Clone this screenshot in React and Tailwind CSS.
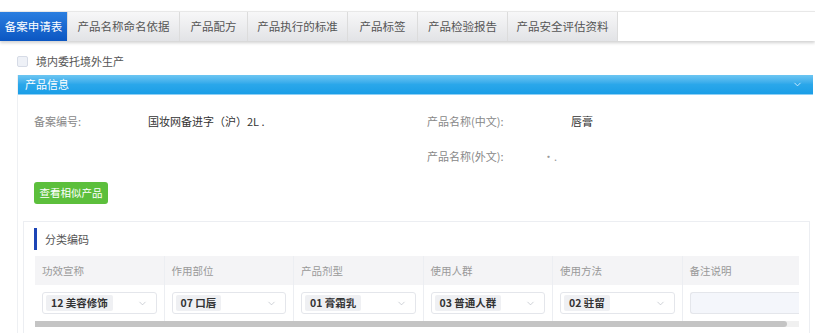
import { ChevronDown } from 'lucide-react'

const tabs = ['备案申请表', '产品名称命名依据', '产品配方', '产品执行的标准', '产品标签', '产品检验报告', '产品安全评估资料']
const tabWidths = ['w-[68px]', 'w-[112px]', 'w-[68px]', 'w-[100px]', 'w-[70px]', 'w-[90px]', 'w-[110px]']

const columns = [
  { title: '功效宣称', value: '12 美容修饰' },
  { title: '作用部位', value: '07 口唇' },
  { title: '产品剂型', value: '01 膏霜乳' },
  { title: '使用人群', value: '03 普通人群' },
  { title: '使用方法', value: '02 驻留' },
]

function App() {
  return (
    <div className="w-[815px] h-[333px] overflow-hidden bg-white text-[11px]" style={{ fontFamily: '"Noto Sans CJK SC", "Noto Sans", sans-serif' }}>
      {/* tab bar */}
      <div className="mt-[11px] h-[30px] flex shadow-[0_2px_3px_rgba(0,0,0,0.18)] border-t border-[#e8e8e8]">
        {tabs.map((t, i) => (
          <div
            key={t}
            className={`${tabWidths[i]} flex items-center justify-center border-r border-[#dcdcdc] text-[11.5px] ${
              i === 0
                ? 'bg-gradient-to-b from-[#2a7ee0] to-[#0b56c2] text-white'
                : 'bg-gradient-to-b from-[#f7f7f8] to-[#e2e3e6] text-[#555]'
            }`}
          >
            {t}
          </div>
        ))}
        <div className="flex-1 bg-white" />
      </div>

      {/* checkbox */}
      <div className="flex items-center gap-[8px] pl-[17px] mt-[14px] h-[12px]">
        <span className="w-[11px] h-[11px] rounded-[2px] border border-[#d6dbe6] bg-[#eef1f7]" />
        <span className="text-[#555]">境内委托境外生产</span>
      </div>

      {/* product info panel */}
      <div className="ml-[17px] mr-[2px] mt-[8px] border-l border-[#eef0f3]">
        <div className="h-[19px] flex items-center justify-between pl-[7px] pr-[10px] bg-gradient-to-b from-[#6cc6f2] via-[#2aa7ea] to-[#1a9ee7] text-white">
          <span>产品信息</span>
          <ChevronDown size={11} strokeWidth={2} className="text-[#d8efff]" />
        </div>
        <div className="border-t border-[#8fd0f5]">
          <div className="grid grid-cols-[393px_1fr] pt-[18px] pl-[16px] text-[11px]">
            <div className="flex h-[16px] items-center">
              <span className="w-[114px] text-[#888]">备案编号:</span>
              <span className="text-[#333]">国妆网备进字（沪）2L .</span>
            </div>
            <div className="flex h-[16px] items-center">
              <span className="w-[114px] text-[#888]">产品名称(中文):</span>
              <span className="text-[#333] pl-[30px]">唇膏</span>
            </div>
            <div />
            <div className="flex h-[16px] items-center mt-[19px]">
              <span className="w-[114px] text-[#888]">产品名称(外文):</span>
              <span className="text-[#999] pl-[2px]">·.</span>
            </div>
          </div>

          <button className="ml-[16px] mt-[18px] w-[74px] h-[22px] rounded-[3px] bg-[#5cbf3c] text-white text-[10.5px]">
            查看相似产品
          </button>

          {/* classification card */}
          <div className="ml-[5px] mr-[3px] mt-[17px] border border-[#eceef2] bg-white pb-[8px]">
            <div className="flex items-center h-[22px] mt-[6px] ml-[10px]">
              <span className="w-[3px] h-[22px] bg-[#1c45b6]" />
              <span className="ml-[8px] text-[#555]">分类编码</span>
            </div>
            <div className="ml-[11px] mr-[10px] mt-[6px] overflow-hidden">
              <div className="flex">
                {columns.map((c) => (
                  <div key={c.title} className="w-[129.5px] shrink-0 border-r border-[#eceef2]">
                    <div className="h-[29px] bg-[#f4f4f6] flex items-center pl-[7px] text-[#999] text-[10.5px]">{c.title}</div>
                    <div className="h-[36px] flex items-center px-[7px]">
                      <div className="flex-1 h-[22px] rounded-[3px] border border-[#e4e6eb] bg-white flex items-center justify-between pl-[3px] pr-[8px]">
                        <span className="bg-[#eff0f3] rounded-[2px] px-[5px] h-[16px] flex items-center text-[#333] font-semibold text-[10.5px]">{c.value}</span>
                        <ChevronDown size={11} strokeWidth={1.5} className="text-[#b8bcc4]" />
                      </div>
                    </div>
                  </div>
                ))}
                <div className="w-[130px] shrink-0">
                  <div className="h-[29px] bg-[#f4f4f6] flex items-center pl-[7px] text-[#999] text-[10.5px]">备注说明</div>
                  <div className="h-[36px] flex items-center pl-[7px]">
                    <div className="flex-1 h-[22px] rounded-l-[3px] border border-r-0 border-[#e4e6eb] bg-[#f4f6fb]" />
                  </div>
                </div>
              </div>
              <div className="h-[6px] bg-[#f0f0f0]">
                <div className="h-full w-[752px] bg-[#c4c4c4] rounded-r-[3px]" />
              </div>
            </div>
          </div>
        </div>
      </div>
    </div>
  )
}

export default App
